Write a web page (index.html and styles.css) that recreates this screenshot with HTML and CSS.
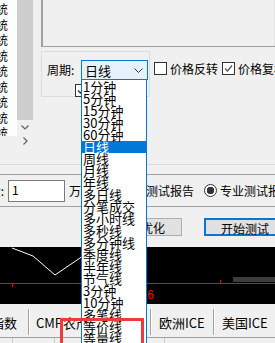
FILE: index.html
```html
<!DOCTYPE html>
<html lang="zh-CN">
<head>
  <meta charset="UTF-8">
  <title>测试设置</title>
  <link rel="stylesheet" href="styles.css">
</head>
<body>
  <div class="upper">
    <div class="listbox">
      <div class="list-col">
        <div class="list-row"><span>交易系统</span></div>
        <div class="list-row"><span>交易系统</span></div>
        <div class="list-row"><span>交易系统</span></div>
        <div class="list-row"><span>交易系统</span></div>
        <div class="list-row"><span>交易系统</span></div>
        <div class="list-row"><span>交易系统</span></div>
        <div class="list-row"><span>交易系统</span></div>
        <div class="list-row"><span>交易系统</span></div>
        <div class="list-row"><span>交易系统</span></div>
      </div>
      <div class="vscroll">
        <div class="thumb"></div>
        <div class="arrow">
          <svg width="8" height="5" viewBox="0 0 8 5"><polyline points="0.5,0.5 4,4 7.5,0.5" fill="none" stroke="#606060" stroke-width="1.2"/></svg>
        </div>
        <div class="arrow">
          <svg width="5" height="8" viewBox="0 0 5 8"><polyline points="0.5,0.5 4,4 0.5,7.5" fill="none" stroke="#606060" stroke-width="1.2"/></svg>
        </div>
      </div>
    </div>

    <div class="side">
      <div class="panel">
        <div class="panel-scroll">
          <svg width="8" height="5" viewBox="0 0 8 5"><polyline points="0.5,0.5 4,4 7.5,0.5" fill="none" stroke="#bfbfbf" stroke-width="1.2"/></svg>
        </div>
      </div>
      <div class="options">
        <div class="period-box">
          <div class="period-row">
            <span class="period-label">周期:</span>
            <div class="combo">
              <span>日线</span>
              <svg width="9" height="5" viewBox="0 0 9 5"><polyline points="0.5,0.5 4.5,4.5 8.5,0.5" fill="none" stroke="#333" stroke-width="1"/></svg>
            </div>
          </div>
          <div class="check-row">
            <span class="checkbox">
              <svg width="11" height="11" viewBox="0 0 11 11"><polyline points="2,5.5 4.5,8 9,2.5" fill="none" stroke="#333" stroke-width="1.3"/></svg>
            </span>
            <span>除权</span>
          </div>
        </div>
        <label class="check">
          <span class="checkbox"></span>
          <span>价格反转</span>
        </label>
        <label class="check">
          <span class="checkbox">
            <svg width="11" height="11" viewBox="0 0 11 11"><polyline points="2,5.5 4.5,8 9,2.5" fill="none" stroke="#555" stroke-width="1.3"/></svg>
          </span>
          <span>价格复权</span>
        </label>
      </div>
    </div>
  </div>

  <div class="sep-light"></div>
  <div class="sep-dark"></div>

  <div class="fund-row">
    <div class="fund-label"><span>初始资金:</span></div>
    <div class="textbox">1</div>
    <span class="unit">万</span>
    <label class="radio radio-simple">
      <span class="radio-dot"></span>
      <span>简单测试报告</span>
    </label>
    <label class="radio">
      <span class="radio-dot checked"></span>
      <span>专业测试报告</span>
    </label>
  </div>

  <div class="sep-dark"></div>

  <div class="button-row">
    <button class="btn btn-opt">参数优化</button>
    <button class="btn btn-default">开始测试</button>
  </div>

  <div class="chart">
    <svg width="275" height="57" viewBox="0 0 275 57">
      <line x1="0" y1="36.5" x2="275" y2="36.5" stroke="#ff0000" stroke-width="1"/>
      <line x1="12.5" y1="36" x2="12.5" y2="40" stroke="#ff0000" stroke-width="1"/>
      <line x1="220.5" y1="33" x2="220.5" y2="37" stroke="#ff0000" stroke-width="1"/>
      <rect x="233" y="30" width="42" height="5" fill="#3c3c3c"/>
      <polyline points="12,1 33,9 55,28 80,11 90,4" fill="none" stroke="#ffffff" stroke-width="1"/>
      <text x="154" y="52" text-anchor="end" fill="#ff0000" font-size="12" font-family="Liberation Sans, sans-serif">2016</text>
    </svg>
  </div>

  <div class="tabs">
    <div class="tab tab-first"><span>上证指数</span></div>
    <div class="tab tab-cmp">CMP农产品</div>
    <div class="tab tab-eu">欧洲ICE</div>
    <div class="tab tab-us">美国ICE</div>
  </div>
  <div class="status">
    <span class="status-cell w13"></span>
    <span class="status-cell w42"></span>
    <span class="status-cell w92"></span>
    <span class="status-cell w18"></span>
  </div>

  <ul class="dropdown">
    <li>1分钟</li>
    <li>5分钟</li>
    <li>15分钟</li>
    <li>30分钟</li>
    <li>60分钟</li>
    <li class="selected">日线</li>
    <li>周线</li>
    <li>月线</li>
    <li>年线</li>
    <li>多日线</li>
    <li>分笔成交</li>
    <li>多小时线</li>
    <li>多秒线</li>
    <li>多分钟线</li>
    <li>季度线</li>
    <li>半年线</li>
    <li>节气线</li>
    <li>3分钟</li>
    <li>10分钟</li>
    <li>多笔线</li>
    <li>等价线</li>
    <li>等量线</li>
  </ul>

  <div class="mark"></div>
</body>
</html>
```

FILE: styles.css
```css
* {
  box-sizing: border-box;
}

html, body {
  margin: 0;
  padding: 0;
}

body {
  position: relative;
  width: 275px;
  height: 343px;
  overflow: hidden;
  background: #f0f0f0;
  color: #000;
  font-family: "Noto Sans CJK SC", sans-serif;
  font-size: 12px;
  line-height: 1;
}

/* upper area */
.upper {
  display: flex;
  height: 164px;
}

.listbox {
  display: flex;
  width: 41px;
  height: 148px;
  flex-shrink: 0;
}

.list-col {
  width: 17px;
  height: 136px;
  background: #fff;
  overflow: hidden;
  padding-top: 1px;
}

.list-row {
  display: flex;
  justify-content: flex-end;
  width: 8px;
  height: 15.5px;
  overflow: hidden;
  white-space: nowrap;
  line-height: 15px;
}

.vscroll {
  display: flex;
  flex-direction: column;
  width: 16px;
}

.thumb {
  height: 120px;
  background: #cdcdcd;
}

.arrow {
  display: flex;
  align-items: center;
  justify-content: center;
  height: 14px;
}

.side {
  flex: 1;
}

.panel {
  display: flex;
  justify-content: flex-end;
  height: 47px;
  border-left: 2px solid #a0a0a0;
  border-bottom: 1px solid #a0a0a0;
}

.panel-scroll {
  display: flex;
  align-items: flex-end;
  justify-content: center;
  width: 12px;
  padding-bottom: 6px;
  border-left: 1px solid #e3e3e3;
}

.options {
  display: flex;
  align-items: flex-start;
  margin-top: 4px;
}

.period-box {
  width: 109px;
  height: 46px;
  border: 1px solid #dcdcdc;
  padding: 8px 0 0 5px;
}

.period-row {
  display: flex;
  align-items: center;
}

.period-label {
  width: 34px;
}

.combo {
  display: flex;
  align-items: center;
  justify-content: space-between;
  width: 67px;
  height: 20px;
  padding: 0 4px 0 3px;
  background: #e5f1fb;
  border: 1px solid #0078d7;
  font-size: 13px;
}

.check-row {
  display: flex;
  align-items: center;
  gap: 3px;
  margin: 4px 0 0 28px;
}

.checkbox {
  display: flex;
  align-items: center;
  justify-content: center;
  width: 13px;
  height: 13px;
  background: #fff;
  border: 1px solid #333;
  flex-shrink: 0;
}

.check {
  display: flex;
  align-items: center;
  gap: 3px;
  margin: 11px 0 0 4px;
  white-space: nowrap;
}

/* separators */
.sep-light {
  height: 1px;
  background: #dadada;
  margin-bottom: 9px;
}

.sep-dark {
  height: 1px;
  background: #a0a0a0;
}

/* fund row */
.fund-row {
  display: flex;
  align-items: center;
  height: 31px;
  white-space: nowrap;
}

.fund-label {
  display: flex;
  justify-content: flex-end;
  width: 4px;
  overflow: hidden;
  flex-shrink: 0;
}

.textbox {
  width: 57px;
  height: 22px;
  margin-left: 4px;
  padding: 3px 0 0 3px;
  background: #fff;
  border: 1px solid #7a7a7a;
  flex-shrink: 0;
}

.unit {
  margin-left: 4px;
}

.radio {
  display: flex;
  align-items: center;
  gap: 3px;
  margin-left: 10px;
}

.radio-simple {
  margin-left: 25px;
}

.radio-dot {
  width: 13px;
  height: 13px;
  border: 1px solid #333;
  border-radius: 50%;
  background: #fff;
  flex-shrink: 0;
}

.radio-dot.checked {
  background: radial-gradient(circle, #333 0 3.5px, #fff 4px);
}

/* buttons */
.button-row {
  display: flex;
  height: 40px;
  padding: 11px 0 0 100px;
  gap: 22px;
}

.btn {
  width: 82px;
  height: 18px;
  padding: 0;
  background: #e1e1e1;
  border: 1px solid #adadad;
  font-family: inherit;
  font-size: 12px;
  flex-shrink: 0;
}

.btn-default {
  border: 2px solid #0078d7;
}

/* chart */
.chart {
  height: 57px;
  background: #000;
}

.chart svg {
  display: block;
}

/* tabs */
.tabs {
  display: flex;
  height: 33px;
  font-size: 13px;
  white-space: nowrap;
}

.tab {
  display: flex;
  align-items: center;
  border-right: 1px solid #a0a0a0;
  box-shadow: 1px 0 0 #fff;
  margin: 5px 1px 2px 0;
  flex-shrink: 0;
  overflow: hidden;
}

.tab-first {
  justify-content: flex-end;
  width: 29px;
  padding-right: 11px;
}

.tab-cmp {
  width: 121px;
  padding-left: 6px;
}

.tab-eu {
  width: 62px;
  padding-left: 7px;
}

.tab-us {
  width: 60px;
  padding-left: 7px;
  border-right: none;
  box-shadow: none;
}

.status {
  display: flex;
  height: 7px;
  border-top: 1px solid #a0a0a0;
}

.status-cell {
  height: 100%;
  border-right: 1px solid #c8c8c8;
}

.w13 { width: 13px; }
.w42 { width: 42px; }
.w92 { width: 92px; }
.w18 { width: 18px; }

/* dropdown list over the form */
.dropdown {
  position: absolute;
  left: 81px;
  top: 80px;
  width: 66px;
  height: 270px;
  margin: 0;
  padding: 0;
  list-style: none;
  background: #fff;
  border: 1px solid #0078d7;
  border-top: none;
  font-size: 13px;
  white-space: nowrap;
}

.dropdown li {
  height: 12px;
  line-height: 12px;
  padding-left: 1px;
}

.dropdown li:first-child {
  margin-top: 1px;
}

.dropdown li.selected {
  background: #0078d7;
  color: #fff;
}

/* red annotation frame */
.mark {
  position: absolute;
  left: 60px;
  top: 318px;
  width: 84px;
  height: 40px;
  border: 3px solid #ef3b3b;
}
```
